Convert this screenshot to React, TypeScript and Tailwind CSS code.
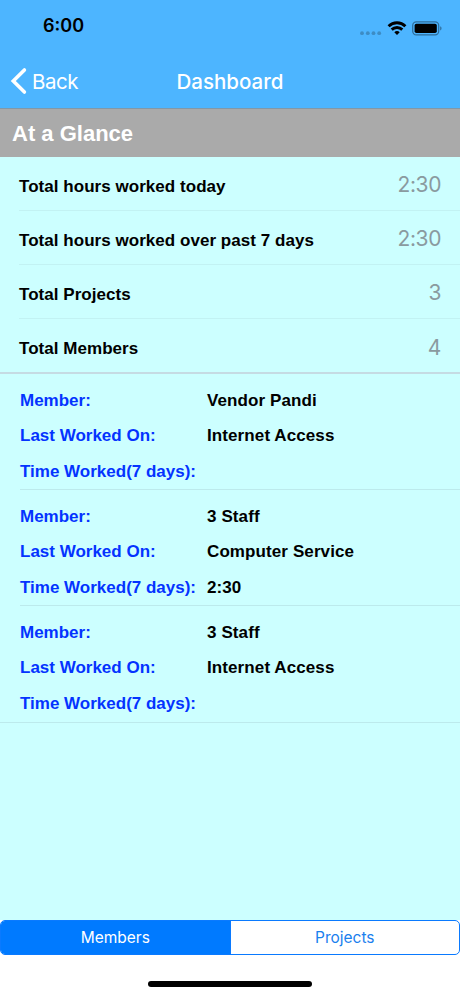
import { useState } from 'react'
import clsx from 'clsx'

type MemberEntry = {
  id: number
  member: string
  lastWorkedOn: string
  timeWorked: string
}

const totals = [
  { label: 'Total hours worked today', value: '2:30' },
  { label: 'Total hours worked over past 7 days', value: '2:30' },
  { label: 'Total Projects', value: '3' },
  { label: 'Total Members', value: '4' },
]

const members: MemberEntry[] = [
  { id: 1, member: 'Vendor Pandi', lastWorkedOn: 'Internet Access', timeWorked: '' },
  { id: 2, member: '3 Staff', lastWorkedOn: 'Computer Service', timeWorked: '2:30' },
  { id: 3, member: '3 Staff', lastWorkedOn: 'Internet Access', timeWorked: '' },
]

function StatusBar() {
  return (
    <div className="flex h-[54px] justify-between pl-[43px] pr-[18px]">
      <span className="pt-[14px] text-[18px] leading-6 font-semibold text-black">6:00</span>
      <div className="flex pt-[20px]">
        <svg width="22" height="16" viewBox="0 0 22 16" className="mr-[5px] text-[#3d8cc4]" fill="currentColor">
          <circle cx="2" cy="13.2" r="1.9" />
          <circle cx="7.8" cy="13.2" r="1.9" />
          <circle cx="13.5" cy="13.2" r="1.9" />
          <circle cx="19.2" cy="13.2" r="1.9" />
        </svg>
        <svg width="20" height="16" viewBox="0 0 20 16" className="mr-[5px]" fill="none" stroke="#000" strokeWidth="2.9">
          <path d="M1.6 6.2a12 12 0 0 1 16.8 0" />
          <path d="M4.7 9.6a7.6 7.6 0 0 1 10.6 0" />
          <path d="M10 15l-2.7-2.7a3.8 3.8 0 0 1 5.4 0z" fill="#000" stroke="none" />
        </svg>
        <svg width="30" height="16" viewBox="0 0 30 16">
          <rect x="0.7" y="1.9" width="26" height="13" rx="3.6" fill="none" stroke="#2e6c99" strokeWidth="1.2" />
          <rect x="2.6" y="3.8" width="22.2" height="9.2" rx="1.8" fill="#000" />
          <path d="M28.2 6.3v4.2c1.8-.6 1.8-3.6 0-4.2z" fill="#2e6c99" />
        </svg>
      </div>
    </div>
  )
}

function NavBar() {
  return (
    <div className="grid h-[54px] grid-cols-3 items-center text-white">
      <button className="flex items-center pl-[10px]">
        <svg width="17" height="28" viewBox="0 0 17 28" fill="none" stroke="currentColor" strokeWidth="3.6" strokeLinecap="round" strokeLinejoin="miter">
          <path d="M14.4 3L3.3 14l11.1 11" />
        </svg>
        <span className="ml-[5px] pt-px text-[20.5px] leading-6 font-normal tracking-[-0.5px]">Back</span>
      </button>
      <h1 className="pt-px text-center text-[20.5px] leading-6 font-medium">Dashboard</h1>
    </div>
  )
}

function MemberField({ label, value }: { label: string; value: string }) {
  return (
    <div className="flex h-[35.6px] items-center">
      <dt className="w-[187px] whitespace-nowrap text-[#0433ff]">{label}</dt>
      <dd className="whitespace-nowrap tracking-[0.1px] text-black">{value}</dd>
    </div>
  )
}

export default function App() {
  const [tab, setTab] = useState<'Members' | 'Projects'>('Members')

  return (
    <div className="flex h-[996px] w-[460px] flex-col overflow-hidden bg-white font-['Inter',sans-serif]">
      <header className="h-[109px] shrink-0 border-b border-[#8298a8] bg-[#4db5ff]">
        <StatusBar />
        <NavBar />
      </header>

      <main className="flex-1 bg-[#ccffff] font-['Liberation_Sans',sans-serif] font-bold">
        <h2 className="flex h-12 items-center bg-[#aaaaaa] pl-[12px] text-[22px] text-white">At a Glance</h2>

        {/* Totals */}
        <ul className="h-[217px] border-b-2 border-[#c5dbe3]">
          {totals.map((item) => (
            <li
              key={item.label}
              className="ml-[19px] flex h-[54px] items-center justify-between border-b border-[#c2f2f3] pr-[19px] last:border-b-0"
            >
              <span className="pt-[6px] text-[17px] tracking-[0.04px] text-black">{item.label}</span>
              <span className="pt-[3px] font-['Inter',sans-serif] text-[21px] font-normal tracking-[-0.4px] text-[#8a9a9f]">
                {item.value}
              </span>
            </li>
          ))}
        </ul>

        {/* Members */}
        <div className="border-b border-[#bceaec] text-[17px]">
          {members.map((entry) => (
            <dl
              key={entry.id}
              className="ml-[20px] h-[116px] border-b border-[#bceaec] pt-[8.5px] last:border-b-0"
            >
              <MemberField label="Member:" value={entry.member} />
              <MemberField label="Last Worked On:" value={entry.lastWorkedOn} />
              <MemberField label="Time Worked(7 days):" value={entry.timeWorked} />
            </dl>
          ))}
        </div>
      </main>

      <footer className="h-[76px] shrink-0">
        <div className="flex h-[35px] overflow-hidden rounded-[5px] border border-[#0a7aff] bg-white">
          {(['Members', 'Projects'] as const).map((name) => (
            <button
              key={name}
              onClick={() => setTab(name)}
              className={clsx(
                'flex-1 text-[15.5px] first:border-r first:border-[#0a7aff]',
                tab === name ? 'bg-[#007aff] text-white' : 'text-[#1a80ee]'
              )}
            >
              {name}
            </button>
          ))}
        </div>
        <div className="mx-auto mt-[26px] h-[6px] w-[164px] rounded-full bg-black" />
      </footer>
    </div>
  )
}
